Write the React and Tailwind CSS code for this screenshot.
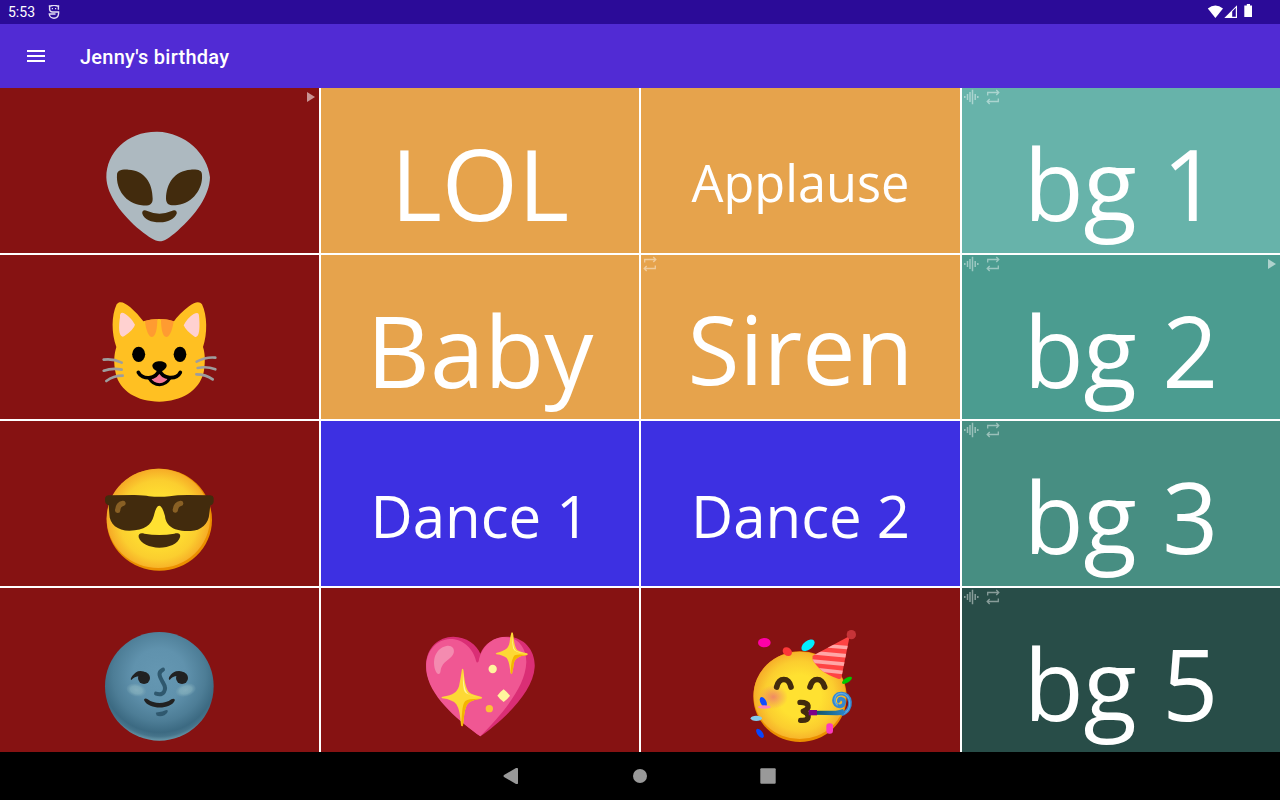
import React from "react";

function Alien() {
  return (
    <svg viewBox="0 0 420 390" className="h-[130px] w-[140px]">
      <path fill="#adb9c0" d="M202 35C110 34 49 98 49 172C50 225 96 286 151 331C176 351 195 364 209 364C222 364 239 353 263 332C318 285 359 225 360 172C353 102 286 37 202 35Z" />
      <path fill="#422b0d" d="M81 165C81 152 92 148 115 149C163 151 188 188 188 236C188 254 177 259 155 256C107 250 78 208 81 165Z" />
      <path fill="#422b0d" d="M336 165C336 151 325 148 302 149C254 153 229 188 228 236C229 254 240 258 262 255C309 249 339 206 336 165Z" />
      <path fill="#422b0d" d="M157 281C155 271 163 268 172 273Q208 289 245 273C255 268 262 273 260 281C254 297 230 308 208 307C185 307 162 298 157 281Z" />
    </svg>
  );
}

function Cat() {
  return (
    <svg viewBox="0 0 420 375" className="h-[125px] w-[140px]">
      <path fill="#ffc022" d="M79 171C64 130 64 76 80 43C89 31 104 38 121 52Q145 73 160 94Q208 80 252 94Q267 72 297 49C316 34 329 33 336 43C352 77 353 131 339 171C347 194 345 225 341 247C328 303 273 335 208 335C142 335 89 304 77 250C70 218 72 194 79 171Z" />
      <path fill="#ffd1d0" d="M90 82C89 68 95 65 106 72Q124 84 135 104Q131 119 102 139C86 146 85 111 90 82ZM327 78C327 67 321 67 311 72Q293 83 281 106Q288 123 314 140C330 146 330 108 327 78Z" />
      <path fill="#ff9b31" d="M165 93Q184 87 202 88C202 114 198 140 186 141C176 141 167 119 165 93ZM213 88Q234 87 251 94C246 126 238 141 229 141C218 141 213 118 213 88Z" />
      <ellipse cx="146" cy="193" rx="19.5" ry="23" />
      <ellipse cx="270" cy="193" rx="19" ry="23" />
      <path fill="#f27896" d="M181 267Q193 250 209 249Q225 250 235 267Q225 283 208 282Q190 281 181 267Z" />
      <path fill="none" stroke="#000" strokeWidth="11" strokeLinecap="round" d="M145 247C156 269 199 271 208 238C217 270 260 269 271 247" />
      <path fill="none" stroke="#000" strokeWidth="9" strokeLinecap="round" d="M177 264Q188 284 209 284Q229 283 240 264" />
      <path d="M187 227C188 218 199 214 209 214C221 214 230 219 230 227C229 237 216 245 208 245C199 244 187 236 187 227Z" />
      <g fill="none" stroke="#9e9e9e" strokeWidth="8" strokeLinecap="round">
        <path d="M41 209Q69 205 95 218M41 242Q68 233 95 239M49 273Q70 257 98 257" />
        <path d="M320 215Q348 200 376 203M323 234Q350 228 376 238M319 253Q348 253 368 268" />
      </g>
    </svg>
  );
}

function Sunglasses() {
  return (
    <svg viewBox="0 0 420 375" className="h-[125px] w-[140px]">
      <defs>
        <radialGradient id="coolFace" gradientUnits="userSpaceOnUse" cx="206" cy="194" r="158">
          <stop offset="0.4" stopColor="#ffe131" />
          <stop offset="0.75" stopColor="#fbce2f" />
          <stop offset="1" stopColor="#f5a625" />
        </radialGradient>
      </defs>
      <ellipse cx="208" cy="194" rx="158" ry="153" fill="#eb8f00" />
      <ellipse cx="205" cy="190" rx="155" ry="149" fill="url(#coolFace)" />
      <path fill="#422b0d" d="M45 129Q47 121 55 121L134 120Q165 121 177 124Q208 127 239 124Q261 120 293 120L361 121Q370 122 371 129V140Q369 150 361 151L358 175C357 207 331 229 300 228C246 230 227 208 225 183Q217 153 208 152Q198 152 191 184C184 209 165 227 118 227C83 227 58 207 58 176L56 151Q45 146 45 138Z" />
      <path fill="none" stroke="#896024" strokeWidth="16" strokeLinecap="round" d="M83 166Q84 148 99 145M256 165Q258 147 272 145" />
      <path fill="#422b0d" d="M146 247C144 235 153 233 163 236Q208 244 253 236C265 233 273 237 270 247C264 267 237 278 208 278C178 278 152 266 146 247Z" />
    </svg>
  );
}

function Moon() {
  return (
    <svg viewBox="0 0 420 390" className="h-[130px] w-[140px]">
      <defs>
        <radialGradient id="moonBody" gradientUnits="userSpaceOnUse" cx="208" cy="165" r="198">
          <stop offset="0" stopColor="#6597b2" />
          <stop offset="0.4" stopColor="#6092ad" />
          <stop offset="0.7" stopColor="#4d7d96" />
          <stop offset="0.87" stopColor="#3c6a82" />
          <stop offset="0.93" stopColor="#46748b" />
          <stop offset="1" stopColor="#6c9dae" />
        </radialGradient>
        <radialGradient id="moonCheek">
          <stop offset="0" stopColor="#93bac4" stopOpacity="0.7" />
          <stop offset="0.6" stopColor="#8fb9c2" stopOpacity="0.55" />
          <stop offset="1" stopColor="#719eb1" stopOpacity="0.2" />
        </radialGradient>
      </defs>
      <circle cx="208" cy="199" r="163" fill="url(#moonBody)" />
      <ellipse cx="139" cy="210" rx="30" ry="19" transform="rotate(14 139 210)" fill="url(#moonCheek)" />
      <ellipse cx="287" cy="210" rx="31" ry="19" transform="rotate(-16 287 210)" fill="url(#moonCheek)" />
      <g fill="#212121">
        <circle cx="162" cy="174" r="18" />
        <circle cx="276" cy="174" r="18" />
        <path d="M124 180C117 178 133 158 144 154Q157 151 170 158L157 169Q134 166 124 180ZM239 180C231 177 244 158 258 154Q272 150 284 158L270 169Q250 165 239 180Z" />
        <path d="M163 242C160 235 168 234 173 238C193 253 224 253 244 238C250 234 256 236 254 242C242 269 177 269 163 242Z" />
      </g>
      <path fill="none" stroke="#2f586e" strokeWidth="12" strokeLinecap="round" d="M219 149C200 158 211 174 219 188C233 210 220 228 198 221" />
      <path fill="#2f586e" d="M199 282Q194 278 204 277Q218 276 227 271Q235 268 233 276C227 288 209 292 199 286Z" />
    </svg>
  );
}

function SparklingHeart() {
  return (
    <svg viewBox="0 0 420 390" className="h-[130px] w-[140px]">
      <path fill="#da2e75" d="M211 349C169 318 67 239 51 161C37 95 79 50 130 50C169 50 201 75 211 101C222 72 254 50 290 50C344 50 377 93 374 142C370 222 264 313 211 349Z" />
      <path fill="#f05793" d="M211 349C154 308 67 239 51 165C38 103 75 59 119 57C161 56 190 88 198 122Q201 132 206 124C214 79 248 51 284 51C326 51 349 86 349 126C347 207 263 295 211 349Z" />
      <path fill="#f48bb0" d="M87 162Q80 163 76 151C64 111 83 84 109 78C124 75 135 84 131 99C127 115 104 122 96 139C90 148 94 159 87 162Z" />
      <path fill="#fdd835" d="M304 38Q309 34 310 46Q313 82 322 91Q333 97 351 100Q356 103 350 106C327 108 315 116 312 129Q309 149 306 161Q303 165 301 157Q298 123 290 114Q280 106 260 103Q254 101 261 98C286 92 296 85 299 66Q301 47 304 38Z" />
      <path fill="#f4b400" d="M350 106C327 108 315 116 312 129Q309 149 306 161Q303 165 302 152Q304 115 314 106Q326 101 350 106Z" />
      <path fill="#fff59d" d="M307 47Q309 82 315 90Q320 96 343 100Q315 97 310 86Q306 73 307 47Z" />
      <path fill="#fdd835" d="M156 147Q160 143 161 155C164 193 170 207 177 217Q189 226 213 230Q220 233 213 236C187 239 176 246 170 256C162 274 162 295 159 316Q156 322 153 315C150 283 148 268 139 253Q128 239 97 235Q92 232 98 230C131 226 141 216 147 199Q152 174 156 147Z" />
      <path fill="#f4b400" d="M213 236C187 239 176 246 170 256C162 274 162 295 159 316Q156 322 154 314C156 270 158 251 166 243Q176 235 213 236Z" />
      <path fill="#fff59d" d="M159 157Q162 208 171 218Q178 227 207 231Q174 227 165 217Q157 206 159 157Z" />
      <circle cx="248" cy="147" r="12.5" fill="#fff59d" />
      <circle cx="238" cy="266" r="11" fill="#fcc235" />
      <path fill="#fff59d" d="M281 208Q290 215 300 227Q291 239 281 246Q271 239 262 227Q271 215 281 208Z" />
    </svg>
  );
}

function Party() {
  return (
    <svg viewBox="0 0 420 390" className="h-[130px] w-[140px]">
      <defs>
        <radialGradient id="partyFace" gradientUnits="userSpaceOnUse" cx="194" cy="228" r="140">
          <stop offset="0.45" stopColor="#ffe131" />
          <stop offset="0.75" stopColor="#fbcd2f" />
          <stop offset="1" stopColor="#f5aa29" />
        </radialGradient>
        <radialGradient id="partyCheek">
          <stop offset="0" stopColor="#ed7770" stopOpacity="0.8" />
          <stop offset="1" stopColor="#ed7770" stopOpacity="0" />
        </radialGradient>
        <linearGradient id="partyHorn">
          <stop offset="0" stopColor="#135062" />
          <stop offset="0.5" stopColor="#1c6e94" />
          <stop offset="1" stopColor="#2d85ca" />
        </linearGradient>
        <clipPath id="partyHat">
          <path d="M232 108L344 48L319 174Q316 178 309 176Q252 158 232 117Z" />
        </clipPath>
      </defs>
      <ellipse cx="195" cy="230" rx="140" ry="136" fill="#eb8f00" />
      <ellipse cx="194" cy="226" rx="138" ry="131" fill="url(#partyFace)" />
      <ellipse cx="115" cy="231" rx="44" ry="36" fill="url(#partyCheek)" />
      <path fill="none" stroke="#422b0d" strokeWidth="17" strokeLinecap="round" d="M125 201C132 171 161 171 168 201M225 201C233 171 260 171 269 201" />
      <path fill="none" stroke="#422b0d" strokeWidth="16" strokeLinecap="round" strokeLinejoin="round" d="M195 247C226 246 225 266 205 274C225 282 226 303 197 301" />
      <path fill="none" stroke="#3587d0" strokeWidth="11" d="M319 283C359 272 349 216 317 221C290 223 291 260 315 259C329 258 332 239 319 236C311 235 309 243 314 247" />
      <path fill="none" stroke="#61ace5" strokeWidth="4" d="M327 281C352 268 350 221 318 220C294 222 297 249 308 256" />
      <path fill="url(#partyHorn)" d="M239 272H302Q316 271 323 267L332 278Q321 286 306 286L239 284Z" />
      <path fill="#7d0087" d="M221 270H246V286H221Z" />
      <g clipPath="url(#partyHat)">
        <path fill="#ff4444" d="M222 40H350V180H222Z" />
        <g stroke="#ffa7a7" strokeWidth="11">
          <path d="M279 78L355 84M222 97L350 109M216 122L344 134M230 147L340 159" />
        </g>
      </g>
      <circle cx="349" cy="44" r="14" fill="#c63438" />
      <ellipse cx="88" cy="68" rx="19" ry="14" fill="#ff00a7" />
      <ellipse cx="157" cy="95" rx="15" ry="12" transform="rotate(38 157 95)" fill="#fc3838" />
      <ellipse cx="219" cy="76" rx="23" ry="13" transform="rotate(-37 219 76)" fill="#00edff" />
      <ellipse cx="336" cy="181" rx="17" ry="7" transform="rotate(-32 336 181)" fill="#00c800" />
      <ellipse cx="85" cy="246" rx="9" ry="16" transform="rotate(-27 85 246)" fill="#104cff" />
      <ellipse cx="88" cy="261" rx="19" ry="5" fill="#ff84b6" />
      <ellipse cx="64" cy="295" rx="17" ry="8" fill="#83cbed" />
      <ellipse cx="75" cy="340" rx="8" ry="16" transform="rotate(-37 75 340)" fill="#0746ff" />
      <rect x="274" y="310" width="20" height="31" rx="9" fill="#fb3bbf" />
    </svg>
  );
}

function WaveIcon() {
  return (
    <svg viewBox="0 0 15 16" className="h-4 w-[15px] text-white/45" stroke="currentColor" strokeWidth="1.5">
      <path d="M.8 7v2M3.5 5v6M6 3v10M8.5 .8v14.4M11.2 5v6M13.8 7v2" />
    </svg>
  );
}

function RepeatIcon() {
  return (
    <svg viewBox="0 0 14 16" className="h-4 w-[14px] text-white/45" fill="none" stroke="currentColor" strokeWidth="1.3">
      <path d="M1.7 6.5V3.5H12.8M10.3 1L12.8 3.5L10.3 6M12.3 9.5V12.5H1.2M3.7 10L1.2 12.5L3.7 15" />
    </svg>
  );
}

function PlayIcon() {
  return (
    <svg viewBox="0 0 8 10" className="h-[10px] w-2 text-white/55">
      <path fill="currentColor" d="M0 0L8 5L0 10Z" />
    </svg>
  );
}

function Pad({ color, label, size = "text-[98px]", emoji, offset = "pt-8 pl-[90px]", wave, loop, play = "" }) {
  return (
    <button className={`relative block overflow-hidden text-left ${color}`}>
      {label && (
        <span className={`flex h-full items-center justify-center pt-[25px] font-['Open_Sans',sans-serif] leading-none whitespace-pre text-white ${size}`}>
          {label}
        </span>
      )}
      {emoji && <span className={`flex h-full items-start ${offset}`}>{emoji}</span>}
      {(wave || loop) && (
        <span className="absolute top-px left-[2px] flex gap-[7px]">
          {wave && <WaveIcon />}
          {loop && <RepeatIcon />}
        </span>
      )}
      {play && <span className={`absolute top-1 ${play}`}><PlayIcon /></span>}
    </button>
  );
}

const maroon = "bg-[#861212]";
const orange = "bg-[#e6a34c]";
const blue = "bg-[#3d30e2]";

export default function App() {
  return (
    <div className="flex h-[800px] w-[1280px] flex-col overflow-hidden bg-black font-[Roboto,sans-serif] text-white">
      <div className="flex h-6 items-center bg-[#2b0b98] pl-2">
        <span className="w-10 text-[14px] leading-6">5:53</span>
        <svg viewBox="0 0 12 14" className="h-[14px] w-3" fill="none" stroke="#e4def4" strokeWidth="1.4">
          <path d="M.8 1H2.5Q6-.4 9.5 1H11.2M1.6 1V4.5Q1.8 6.9 4.5 7H10.6V8.5C10.4 11.4 8.4 13.2 6 13.2S1.4 11.4 1.3 9H7.5M10.4 1V4.7" />
          <path d="M3.8 3.6H5M7 3.6H8.2" />
        </svg>
        <svg viewBox="0 0 46 16" className="mr-[27px] ml-auto h-4 w-[46px]" fill="#fff">
          <path d="M.8 4.6Q8.3-1.6 16 4.6L8.4 14Z" />
          <path fillRule="evenodd" d="M17.3 14L30 1.2V14ZM25.2 7.4V12.8H28.8V3.8Z" />
          <path d="M38 1.5H39.8V0H43V1.5H45V13H37.3V1.5Z" />
        </svg>
      </div>

      <header className="flex h-16 items-center bg-[#512bd4] pl-[27px]">
        <svg viewBox="0 0 18 12" className="h-3 w-[18px]" fill="#fff">
          <path d="M0 0H18V2H0ZM0 5H18V7H0ZM0 10H18V12H0Z" />
        </svg>
        <h1 className="pt-[2px] pl-[35px] text-[20px] leading-6 font-medium tracking-[0.25px]">Jenny's birthday</h1>
      </header>

      <main className="grid h-[664px] grid-cols-[319px_318px_319px_318px] grid-rows-[165px_164px_165px_164px] gap-[2px] bg-white">
        <Pad color={maroon} emoji={<Alien />} play="right-1" />
        <Pad color={orange} label="LOL" />
        <Pad color={orange} label="Applause" size="text-[50.5px]" />
        <Pad color="bg-[#67b3aa]" label="bg 1" wave loop />

        <Pad color={maroon} emoji={<Cat />} offset="pt-[35px] pl-[90px]" />
        <Pad color={orange} label="Baby" />
        <Pad color={orange} label="Siren" size="text-[94.8px]" loop />
        <Pad color="bg-[#4b9c90]" label="bg 2" wave loop play="right-1" />

        <Pad color={maroon} emoji={<Sunglasses />} offset="pt-[34px] pl-[90px]" />
        <Pad color={blue} label="Dance 1" size="text-[58.2px]" />
        <Pad color={blue} label="Dance 2" size="text-[58.2px]" />
        <Pad color="bg-[#478e82]" label="bg 3" wave loop />

        <Pad color={maroon} emoji={<Moon />} />
        <Pad color={maroon} emoji={<SparklingHeart />} offset="pt-8 pl-[89px]" />
        <Pad color={maroon} emoji={<Party />} offset="pt-8 pl-[94px]" />
        <Pad color="bg-[#284d48]" label="bg 5" wave loop />
      </main>

      <nav className="flex h-12 items-center pl-[503px]">
        <svg viewBox="0 0 16 16" className="h-4 w-4"><path fill="#999" d="M1 7L13 0Q15-.5 15 1V15Q15 16.5 13 16L1 9Q0 8 1 7Z" /></svg>
        <svg viewBox="0 0 14 14" className="ml-[114px] h-[14px] w-[14px]"><circle cx="7" cy="7" r="7" fill="#999" /></svg>
        <svg viewBox="0 0 16 16" className="ml-[113px] h-4 w-4"><rect x=".3" y=".3" width="15.4" height="15.4" rx="1" fill="#999" /></svg>
      </nav>
    </div>
  );
}
